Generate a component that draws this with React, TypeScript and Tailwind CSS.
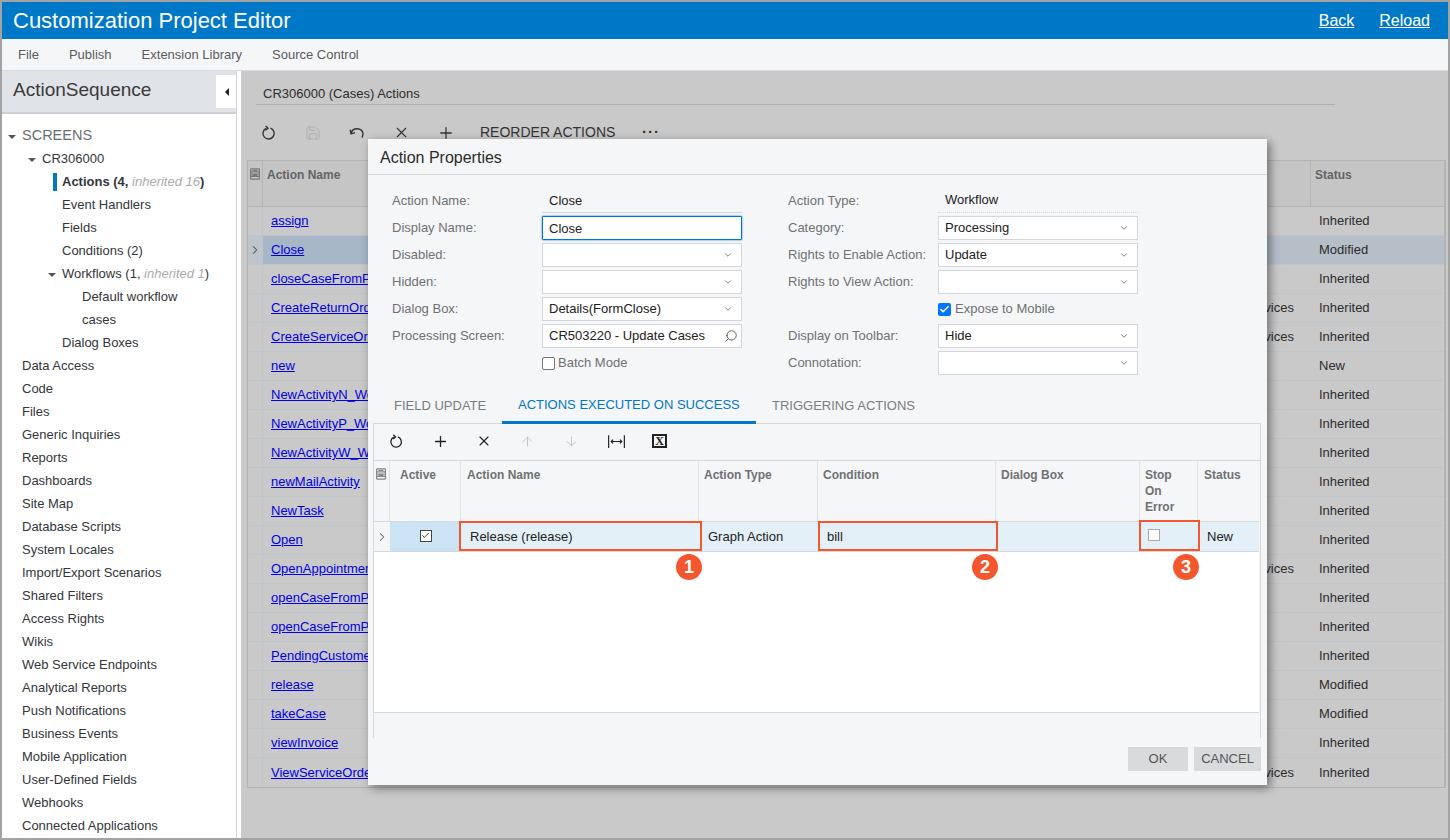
import { ChevronDown, ChevronRight, Search, Plus, X, ArrowUp, ArrowDown, Save, Check } from "lucide-react";

const sideItems = [
  "Data Access", "Code", "Files", "Generic Inquiries", "Reports", "Dashboards", "Site Map", "Database Scripts",
  "System Locales", "Import/Export Scenarios", "Shared Filters", "Access Rights", "Wikis", "Web Service Endpoints",
  "Analytical Reports", "Push Notifications", "Business Events", "Mobile Application", "User-Defined Fields",
  "Webhooks", "Connected Applications",
];

const actions = [
  { name: "assign", status: "Inherited" },
  { name: "Close", status: "Modified", selected: true },
  { name: "closeCaseFromPortal", status: "Inherited" },
  { name: "CreateReturnOrder", status: "Inherited", extra: "Services" },
  { name: "CreateServiceOrder", status: "Inherited", extra: "Services" },
  { name: "new", status: "New" },
  { name: "NewActivityN_Workflow", status: "Inherited" },
  { name: "NewActivityP_Workflow", status: "Inherited" },
  { name: "NewActivityW_Workflow", status: "Inherited" },
  { name: "newMailActivity", status: "Inherited" },
  { name: "NewTask", status: "Inherited" },
  { name: "Open", status: "Inherited" },
  { name: "OpenAppointment", status: "Inherited", extra: "Services" },
  { name: "openCaseFromPortal", status: "Inherited" },
  { name: "openCaseFromPortal2", status: "Inherited" },
  { name: "PendingCustomer", status: "Inherited" },
  { name: "release", status: "Modified" },
  { name: "takeCase", status: "Modified" },
  { name: "viewInvoice", status: "Inherited" },
  { name: "ViewServiceOrder", status: "Inherited", extra: "Services" },
];

function RefreshIcon({ className }: { className?: string }) {
  return (
    <svg viewBox="0 0 16 16" fill="none" stroke="currentColor" strokeWidth="1.4" className={className}>
      <path d="M9.5 3.1A5.6 5.6 0 1 1 5 3.4" />
      <path d="M4.6 0.9 L7 3.1 L4.4 5.2" />
    </svg>
  );
}

function UndoIcon({ className }: { className?: string }) {
  return (
    <svg viewBox="0 0 16 16" fill="none" stroke="currentColor" strokeWidth="1.4" className={className}>
      <path d="M2.2 8.2 A6 5.6 0 0 1 14 8.5 Q14 11 12.8 12.6" />
      <path d="M1.2 4.6 L2 8.8 L6 7.6" />
    </svg>
  );
}

function Tri({ className }: { className?: string }) {
  return <span className={`absolute top-[11px] w-0 h-0 border-l-[4px] border-r-[4px] border-t-[4px] border-l-transparent border-r-transparent border-t-[#555] ${className}`} />;
}

function GridLayoutIcon({ className }: { className?: string }) {
  return (
    <svg viewBox="0 0 12 12" fill="none" stroke="currentColor" strokeWidth="1.2" className={className}>
      <rect x="1.6" y="0.8" width="8.8" height="10.4" rx="0.6" />
      <path d="M1.6 3.8h8.8M1.6 6h8.8M1.6 8.4h8.8M3.4 2.4h5M3.4 7.2h5" />
    </svg>
  );
}

function Label({ children }: { children: React.ReactNode }) {
  return <div className="text-[13px] leading-[24px] text-[#6f7175] whitespace-nowrap">{children}</div>;
}

function SelectField({ value }: { value?: string }) {
  return (
    <div className="h-[24px] w-[200px] bg-white border border-[#d4d6d9] flex items-center justify-between pl-[6px] pr-[8px] text-[13px] text-[#222]">
      <span>{value}</span>
      <ChevronDown className="w-[10px] h-[10px] text-[#666]" strokeWidth={2} />
    </div>
  );
}

function Marker({ n, className }: { n: number; className: string }) {
  return (
    <div className={`absolute w-[26px] h-[26px] rounded-full bg-[#f4572d] text-white text-[18px] font-bold flex items-center justify-center ${className}`}>
      {n}
    </div>
  );
}

export default function App() {
  return (
    <div className="relative w-[1450px] h-[840px] overflow-hidden border-2 border-[#a3a3a3] flex flex-col bg-white font-[family-name:Liberation_Sans,Arial,sans-serif]">
      {/* Header */}
      <header className="h-[37px] shrink-0 bg-[#0078c8] text-white flex items-center justify-between pl-[11px] pr-[18px]">
        <h1 className="text-[22px]">Customization Project Editor</h1>
        <div className="flex gap-[25px] text-[16px]">
          <a className="underline">Back</a>
          <a className="underline">Reload</a>
        </div>
      </header>
      <nav className="h-[32px] shrink-0 bg-[#f5f6f8] border-b border-[#d9dbde] flex items-center pl-[16px] gap-[30px] text-[13px] text-[#5a5c60]">
        <span>File</span>
        <span>Publish</span>
        <span>Extension Library</span>
        <span>Source Control</span>
      </nav>

      <div className="flex-1 flex min-h-0">
        {/* Sidebar */}
        <aside className="w-[235px] shrink-0 border-r border-[#d5d5d5] flex flex-col overflow-hidden">
          <div className="relative h-[43px] shrink-0 bg-[#e0e3e8] border-b-2 border-[#cdd0d4] flex items-center pl-[11px] pb-[3px] text-[19px] text-[#3a3a3a]">
            ActionSequence
            <div className="absolute right-[-1px] top-[4px] w-[21px] h-[33px] bg-white flex items-center justify-center">
              <span className="w-0 h-0 border-t-[4px] border-b-[4px] border-r-[4px] border-t-transparent border-b-transparent border-r-[#222]" />
            </div>
          </div>
          <div className="pt-[10px] text-[13px] leading-[23px] text-[#33363a] whitespace-nowrap">
            <div className="relative h-[23px] pl-[20px] text-[14.5px] text-[#6a6d72]">
              <Tri className="left-[6px]" />
              SCREENS
            </div>
            <div className="relative h-[23px] pl-[40px]">
              <Tri className="left-[26px]" />
              CR306000
            </div>
            <div className="relative h-[23px] pl-[60px]">
              <span className="absolute left-[51px] top-[3px] w-[4px] h-[18px] bg-[#0078c8]" />
              <b>Actions (4, </b>
              <i className="text-[#aaa]">inherited 16</i>
              <b>)</b>
            </div>
            <div className="h-[23px] pl-[60px]">Event Handlers</div>
            <div className="h-[23px] pl-[60px]">Fields</div>
            <div className="h-[23px] pl-[60px]">Conditions (2)</div>
            <div className="relative h-[23px] pl-[60px]">
              <Tri className="left-[46px]" />
              Workflows (1, <i className="text-[#aaa]">inherited 1</i>)
            </div>
            <div className="h-[23px] pl-[80px]">Default workflow</div>
            <div className="h-[23px] pl-[80px]">cases</div>
            <div className="h-[23px] pl-[60px]">Dialog Boxes</div>
            {sideItems.map((s) => (
              <div key={s} className="h-[23px] pl-[20px]">{s}</div>
            ))}
          </div>
        </aside>
        <div className="w-[4px] shrink-0 bg-white" />

        {/* Dimmed main area */}
        <main className="flex-1 min-w-0 bg-[#c9c9c9] pl-[6px] flex flex-col text-[13px] text-[#2c2c2c]">
          <div className="h-[34px] mr-[113px] ml-[9px] border-b border-[#b0b0b0] flex items-end pb-[1px] pl-[7px] text-[13px]">
            CR306000 (Cases) Actions
          </div>
          <div className="h-[55px] shrink-0 flex items-center pl-[14px] text-[#333]">
            <span className="w-[44px]"><RefreshIcon className="w-[16px] h-[16px]" /></span>
            <span className="w-[44px]"><Save className="w-[16px] h-[16px] text-[#aaa]" strokeWidth={1.3} /></span>
            <span className="w-[44px]"><UndoIcon className="w-[16px] h-[16px]" /></span>
            <span className="w-[44px]"><X className="w-[17px] h-[17px]" strokeWidth={1.5} /></span>
            <span className="w-[43px]"><Plus className="w-[18px] h-[18px]" strokeWidth={1.7} /></span>
            <span className="text-[14px] w-[166px] whitespace-nowrap">REORDER ACTIONS</span>
            <span className="text-[15px] font-bold tracking-[1px] -ml-[4px]">···</span>
          </div>
          <div className="border-r-2 border-b border-[#b3b3b3] mr-[2px] border-l border-t">
            <div className="h-[46px] flex bg-[#c5c5c5] border-b border-[#b5b5b5] text-[12px] font-bold text-[#626468]">
              <div className="w-[15px] border-r border-[#b5b5b5] pt-[7px] pl-[1px]">
                <GridLayoutIcon className="w-[12px] h-[12px] text-[#777]" />
              </div>
              <div className="flex-1 pl-[4px] pt-[5px]">Action Name</div>
              <div className="w-[134px] border-l border-[#b5b5b5] pl-[4px] pt-[5px]">Status</div>
            </div>
            {actions.map((a) => (
              <div key={a.name} className={`h-[29px] flex items-center border-b border-[#bcc4cc] whitespace-nowrap last:border-b-0 ${a.selected ? "bg-[#b6bfc8]" : ""}`}>
                <div className={`w-[15px] h-full flex items-center justify-center border-r border-[#bcc4cc] ${a.selected ? "bg-[#bcc4cc]" : ""}`}>
                  {a.selected && <ChevronRight className="w-[14px] h-[14px] text-[#555]" strokeWidth={1.8} />}
                </div>
                <div className={`w-[400px] h-full flex items-center pl-[8px] ${a.selected ? "bg-[#a7b7c7]" : ""}`}>
                  <a className="underline text-[#0000e0]">{a.name}</a>
                </div>
                <div className="flex-1 text-right pr-[16px]">{a.extra}</div>
                <div className="w-[134px] pl-[9px]">{a.status}</div>
              </div>
            ))}
          </div>
        </main>
      </div>

      {/* Action Properties dialog */}
      <div className="absolute left-[366px] top-[137px] w-[899px] h-[646px] bg-[#f5f6f8] shadow-[3px_3px_9px_rgba(0,0,0,0.45)] flex flex-col">
        <div className="h-[36px] shrink-0 border-b border-[#d5d7da] flex items-center pl-[12px] pt-[2px] text-[16px] text-[#2b2b2b]">
          Action Properties
        </div>

        <div className="h-[201px] shrink-0 flex pt-[14px] pl-[24px]">
          <div className="w-[150px] flex flex-col gap-[3px]">
            <Label>Action Name:</Label>
            <Label>Display Name:</Label>
            <Label>Disabled:</Label>
            <Label>Hidden:</Label>
            <Label>Dialog Box:</Label>
            <Label>Processing Screen:</Label>
          </div>
          <div className="w-[246px] flex flex-col gap-[3px]">
            <div className="h-[24px] w-[200px] border-b border-[#d4d6d9] pl-[7px] text-[13px] leading-[23px] text-[#222]">Close</div>
            <div className="h-[24px] w-[200px] bg-white border border-[#0078c8] rounded-[1px] shadow-[0_0_2px_#0078c8] pl-[6px] text-[13px] leading-[23px] text-[#222]">Close</div>
            <SelectField />
            <SelectField />
            <SelectField value="Details(FormClose)" />
            <div className="h-[24px] w-[200px] bg-white border border-[#d4d6d9] flex items-center justify-between pl-[6px] pr-[3px] text-[13px] text-[#222]">
              <span>CR503220 - Update Cases</span>
              <Search className="w-[14px] h-[14px] text-[#555] -scale-x-100" strokeWidth={1.6} />
            </div>
            <div className="h-[24px] flex items-center gap-[3px] text-[13px] text-[#6f7175]">
              <span className="w-[13px] h-[13px] rounded-[2px] border border-[#767676] bg-white" />
              Batch Mode
            </div>
          </div>
          <div className="w-[150px] flex flex-col gap-[3px]">
            <Label>Action Type:</Label>
            <Label>Category:</Label>
            <Label>Rights to Enable Action:</Label>
            <Label>Rights to View Action:</Label>
            <div className="h-[24px]" />
            <Label>Display on Toolbar:</Label>
            <Label>Connotation:</Label>
          </div>
          <div className="flex flex-col gap-[3px]">
            <div className="h-[24px] w-[200px] border-b border-dotted border-[#d4d6d9] pl-[7px] text-[13px] leading-[22px] text-[#222]">Workflow</div>
            <SelectField value="Processing" />
            <SelectField value="Update" />
            <SelectField />
            <div className="h-[24px] flex items-center gap-[4px] text-[13px] text-[#6f7175]">
              <span className="w-[13px] h-[13px] rounded-[2px] bg-[#0075ff] flex items-center justify-center">
                <Check className="w-[11px] h-[11px] text-white" strokeWidth={3.5} />
              </span>
              Expose to Mobile
            </div>
            <SelectField value="Hide" />
            <SelectField />
          </div>
        </div>

        {/* Tabs */}
        <div className="h-[48px] shrink-0 ml-[5px] mr-[6px] flex items-end border-b border-[#d5d7da] text-[13px]">
          <div className="w-[129px] pl-[21px] pb-[8px] text-[#7a7c80]">FIELD UPDATE</div>
          <div className="w-[254px] -mb-[1px] pb-[7px] pl-[16px] text-[#0078c8] border-b-[3px] border-[#0078c8] whitespace-nowrap">ACTIONS EXECUTED ON SUCCESS</div>
          <div className="pl-[16px] pb-[8px] text-[#7a7c80]">TRIGGERING ACTIONS</div>
        </div>

        {/* Inner grid */}
        <div className="relative h-[314px] shrink-0 ml-[5px] mr-[6px] border-l border-r border-[#d5d7da]">
          <div className="h-[36px] flex items-center pl-[15px] pb-[2px] text-[#222]">
            <span className="w-[43px]"><RefreshIcon className="w-[15px] h-[15px]" /></span>
            <span className="w-[44px]"><Plus className="w-[17px] h-[17px]" strokeWidth={1.8} /></span>
            <span className="w-[44px]"><X className="w-[16px] h-[16px]" strokeWidth={1.7} /></span>
            <span className="w-[44px]"><ArrowUp className="w-[15px] h-[15px] text-[#c4c6c9]" strokeWidth={1.6} /></span>
            <span className="w-[44px]"><ArrowDown className="w-[15px] h-[15px] text-[#c4c6c9]" strokeWidth={1.6} /></span>
            <span className="w-[44px]">
              <svg viewBox="0 0 16 12" fill="none" stroke="currentColor" strokeWidth="1.1" className="w-[17px] h-[13px]">
                <path d="M0.6 0v12M15.4 0v12M3 6h10M4.8 4.2 3 6l1.8 1.8M11.2 4.2 13 6l-1.8 1.8" />
              </svg>
            </span>
            <span className="w-[15px] h-[14px] border-2 border-[#222] flex items-center justify-center font-[family-name:Liberation_Serif,serif] font-bold text-[12px] leading-none">X</span>
          </div>
          <div className="border-t border-[#d5d7da] h-[61px] flex text-[12px] font-bold text-[#6f7175]">
            <div className="w-[16px] border-r border-[#e0e2e5] pt-[7px] pl-[1px]">
              <GridLayoutIcon className="w-[12px] h-[12px] text-[#888]" />
            </div>
            <div className="w-[71px] border-r border-[#e0e2e5] pl-[10px] pt-[5px]">Active</div>
            <div className="w-[238px] border-r border-[#e0e2e5] pl-[6px] pt-[5px]">Action Name</div>
            <div className="w-[119px] border-r border-[#e0e2e5] pl-[5px] pt-[5px]">Action Type</div>
            <div className="w-[178px] border-r border-[#e0e2e5] pl-[5px] pt-[5px]">Condition</div>
            <div className="w-[144px] border-r border-[#e0e2e5] pl-[5px] pt-[5px]">Dialog Box</div>
            <div className="w-[58px] border-r border-[#e0e2e5] pl-[5px] pt-[6px] leading-[16px]">Stop<br />On<br />Error</div>
            <div className="flex-1 pl-[6px] pt-[5px]">Status</div>
          </div>
          <div className="h-[192px] bg-white border-y border-[#d5d7da] mr-[1px]">
            <div className="h-[30px] flex items-center bg-[#e3f0f8] border-b border-[#d5d7da] text-[13px] text-[#222]">
              <div className="w-[16px] h-full bg-[#f5f6f8] flex items-center justify-center">
                <ChevronRight className="w-[14px] h-[14px] text-[#666]" strokeWidth={1.8} />
              </div>
              <div className="w-[71px] h-full bg-[#cbe3f3] flex items-center justify-center">
                <span className="w-[12px] h-[12px] -mt-[2px] border border-[#444] bg-white flex items-center justify-center">
                  <Check className="w-[9px] h-[9px] text-[#333]" strokeWidth={2.5} />
                </span>
              </div>
              <div className="w-[238px] pl-[9px]">Release (release)</div>
              <div className="w-[119px] pl-[9px]">Graph Action</div>
              <div className="w-[178px] pl-[9px]">bill</div>
              <div className="w-[144px]" />
              <div className="w-[58px] pl-[8px]">
                <span className="block w-[12px] h-[12px] border border-[#aaa] bg-white -mt-[3px]" />
              </div>
              <div className="flex-1 pl-[9px]">New</div>
            </div>
          </div>
          {/* Callouts over the row */}
          <div className="absolute left-[85px] top-[97px] w-[243px] h-[30px] border-[2px] border-[#f4572d]" />
          <div className="absolute left-[444px] top-[97px] w-[180px] h-[30px] border-[2px] border-[#f4572d]" />
          <div className="absolute left-[765px] top-[96px] w-[61px] h-[31px] border-[2px] border-[#f4572d]" />
          <Marker n={1} className="left-[302px] top-[130px]" />
          <Marker n={2} className="left-[598px] top-[130px]" />
          <Marker n={3} className="left-[799px] top-[130px]" />
        </div>

        {/* Footer */}
        <div className="flex-1 flex justify-end items-start pr-[6px] pt-[9px] gap-[6px] text-[13px] text-[#555]">
          <button className="w-[60px] h-[24px] bg-[#d8dadc]">OK</button>
          <button className="w-[67px] h-[24px] bg-[#d8dadc]">CANCEL</button>
        </div>
      </div>
    </div>
  );
}
